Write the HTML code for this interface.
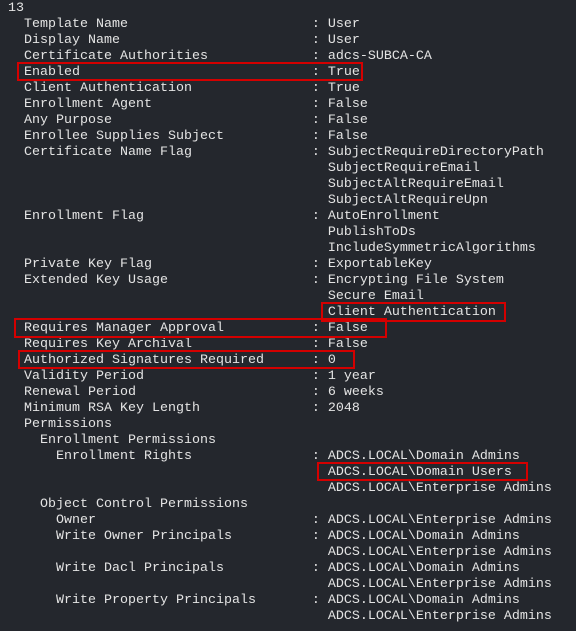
<!DOCTYPE html><html><head><style>
html,body{margin:0;padding:0;background:#24272d;width:576px;height:631px;overflow:hidden}
pre{position:absolute;left:8px;top:1px;margin:0;font-family:"Liberation Mono",monospace;font-size:13.33px;line-height:16px;color:#e4e4e4}
.b{position:absolute;border:2px solid #d40000;box-sizing:border-box}
</style></head><body>
<pre>13
  Template Name                       : User
  Display Name                        : User
  Certificate Authorities             : adcs-SUBCA-CA
  Enabled                             : True
  Client Authentication               : True
  Enrollment Agent                    : False
  Any Purpose                         : False
  Enrollee Supplies Subject           : False
  Certificate Name Flag               : SubjectRequireDirectoryPath
                                        SubjectRequireEmail
                                        SubjectAltRequireEmail
                                        SubjectAltRequireUpn
  Enrollment Flag                     : AutoEnrollment
                                        PublishToDs
                                        IncludeSymmetricAlgorithms
  Private Key Flag                    : ExportableKey
  Extended Key Usage                  : Encrypting File System
                                        Secure Email
                                        Client Authentication
  Requires Manager Approval           : False
  Requires Key Archival               : False
  Authorized Signatures Required      : 0
  Validity Period                     : 1 year
  Renewal Period                      : 6 weeks
  Minimum RSA Key Length              : 2048
  Permissions
    Enrollment Permissions
      Enrollment Rights               : ADCS.LOCAL\Domain Admins
                                        ADCS.LOCAL\Domain Users
                                        ADCS.LOCAL\Enterprise Admins
    Object Control Permissions
      Owner                           : ADCS.LOCAL\Enterprise Admins
      Write Owner Principals          : ADCS.LOCAL\Domain Admins
                                        ADCS.LOCAL\Enterprise Admins
      Write Dacl Principals           : ADCS.LOCAL\Domain Admins
                                        ADCS.LOCAL\Enterprise Admins
      Write Property Principals       : ADCS.LOCAL\Domain Admins
                                        ADCS.LOCAL\Enterprise Admins</pre>
<div class="b" style="left:17px;top:62px;width:346px;height:19px"></div>
<div class="b" style="left:321px;top:302px;width:185px;height:20px"></div>
<div class="b" style="left:14px;top:318px;width:373px;height:20px"></div>
<div class="b" style="left:18px;top:350px;width:337px;height:19px"></div>
<div class="b" style="left:317px;top:462px;width:211px;height:19px"></div>
</body></html>
